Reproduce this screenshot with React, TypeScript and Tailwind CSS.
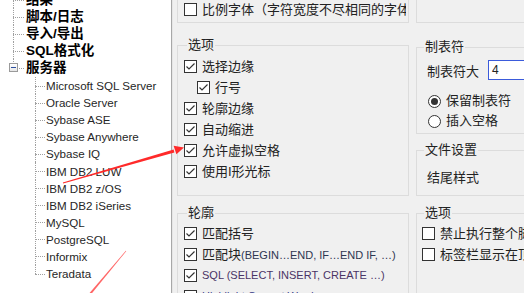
import React from "react";

const parents = ["结果", "脚本/日志", "导入/导出", "SQL格式化", "服务器"];

const servers = [
  "Microsoft SQL Server",
  "Oracle Server",
  "Sybase ASE",
  "Sybase Anywhere",
  "Sybase IQ",
  "IBM DB2 LUW",
  "IBM DB2 z/OS",
  "IBM DB2 iSeries",
  "MySQL",
  "PostgreSQL",
  "Informix",
  "Teradata",
];

const font = "font-['Liberation_Sans','Noto_Sans_CJK_SC',sans-serif]";

function Branch({ last, width }: { last?: boolean; width: string }) {
  return (
    <span className={`relative h-full shrink-0 ${width}`}>
      <span
        className={`absolute left-0 top-0 border-l border-dotted border-[#a0a0a0] ${last ? "h-1/2" : "h-full"}`}
      />
      <span className="absolute left-0 top-1/2 w-full border-t border-dotted border-[#a0a0a0]" />
    </span>
  );
}

function Check({ checked = true }: { checked?: boolean }) {
  return (
    <span className="flex h-[13px] w-[13px] shrink-0 items-center justify-center border border-[#333] bg-white">
      {checked ? (
        <svg width="11" height="11" viewBox="0 0 11 11">
          <polyline points="1.5,5.5 4,8 9.5,2.5" fill="none" stroke="#333" strokeWidth="1.2" />
        </svg>
      ) : null}
    </span>
  );
}

function Radio({ on }: { on?: boolean }) {
  return (
    <span className="flex h-[13px] w-[13px] shrink-0 items-center justify-center rounded-full border border-[#333] bg-white">
      {on ? <span className="h-[7px] w-[7px] rounded-full bg-[#333]" /> : null}
    </span>
  );
}

function Group({ label, className, labelLeft, children }: { label: string; className: string; labelLeft: string; children?: React.ReactNode }) {
  return (
    <div className={`relative shrink-0 border border-[#dcdcdc] ${className}`}>
      <span className={`absolute -top-[9px] bg-[#f0f0f0] px-px text-[13px] leading-[16px] ${labelLeft}`}>{label}</span>
      {children}
    </div>
  );
}

function Row({ children, className = "" }: { children: React.ReactNode; className?: string }) {
  return <div className={`flex h-[21px] items-center gap-[5px] whitespace-nowrap ${className}`}>{children}</div>;
}

export default function App() {
  return (
    <div className={`relative flex h-[293px] w-[524px] overflow-hidden bg-[#f0f0f0] text-[#222] ${font}`}>
      {/* tree */}
      <div className="w-[172px] shrink-0 overflow-hidden border-r border-[#a8a8a8] bg-white">
        <div className="-mt-[9px]">
          {parents.map((p, i) => (
            <div key={p} className="flex h-[17px] items-center pl-[13px]">
              <Branch width="w-[11px]" last={i === parents.length - 1} />
              <span className="relative ml-[2px] whitespace-nowrap text-[13.5px] font-bold leading-[17px] text-black">
                {p}
              </span>
            </div>
          ))}
          <div className="pt-px">
            {servers.map((s, i) => (
              <div key={s} className="flex h-[17.1px] items-center pl-[35px]">
                <Branch width="w-[10px]" last={i === servers.length - 1} />
                <span className="ml-px whitespace-nowrap text-[11.6px] leading-[17px] text-[#262626]">{s}</span>
              </div>
            ))}
          </div>
        </div>
      </div>
      {/* expand box for 服务器 */}
      <span className="absolute left-[9px] top-[63px] flex h-[9px] w-[9px] items-center justify-center border border-[#9a9a9a] bg-gradient-to-b from-white to-[#e6e6e6]">
        <span className="h-px w-[5px] bg-[#2b4f9e]" />
      </span>

      {/* options */}
      <div className="flex flex-1 gap-[7px] border-l border-[#e6e6e6] pl-[4px]">
        <div className="-mt-[10px] flex w-[232px] shrink-0 flex-col">
          <div className="flex h-[33px] shrink-0 items-end border border-[#dcdcdc] pb-[2px] pl-[6px]">
            <Row className="w-[222px] overflow-hidden">
              <Check checked={false} />
              <span className="text-[13px]">比例字体（字符宽度不尽相同的字体）</span>
            </Row>
          </div>
          <Group label="选项" className="mt-[22px] h-[151px] pl-[6px] pt-[10px]" labelLeft="left-[9px]">
            <Row>
              <Check />
              <span className="text-[13px]">选择边缘</span>
            </Row>
            <Row className="pl-[13px]">
              <Check />
              <span className="text-[13px]">行号</span>
            </Row>
            <Row>
              <Check />
              <span className="text-[13px]">轮廓边缘</span>
            </Row>
            <Row>
              <Check />
              <span className="text-[13px]">自动缩进</span>
            </Row>
            <Row>
              <Check />
              <span className="text-[13px]">允许虚拟空格</span>
            </Row>
            <Row>
              <Check />
              <span className="text-[13px]">使用I形光标</span>
            </Row>
          </Group>
          <Group label="轮廓" className="mt-[17px] h-[120px] pl-[6px] pt-[9px]" labelLeft="left-[9px]">
            <Row>
              <Check />
              <span className="text-[13px]">匹配括号</span>
            </Row>
            <Row>
              <Check />
              <span className="text-[13px]">
                匹配块<span className="text-[11px] text-[#2d3550]">(BEGIN…END, IF…END IF, …)</span>
              </span>
            </Row>
            <Row>
              <Check />
              <span className="text-[11px] text-[#4a3466]">SQL (SELECT, INSERT, CREATE …)</span>
            </Row>
            <Row>
              <Check />
              <span className="text-[11px] text-[#3a3f8a]">Highlight Current Word</span>
            </Row>
          </Group>
        </div>

        <div className="-mt-[10px] flex w-[130px] shrink-0 flex-col">
          <div className="h-[33px] shrink-0 border border-[#dcdcdc]" />
          <Group label="制表符" className="mt-[24px] h-[87px] pl-[10px] pt-[12px]" labelLeft="left-[7px]">
            <div className="flex h-[20px] items-center gap-[9px] whitespace-nowrap">
              <span className="pt-[4px] text-[13px]">制表符大</span>
              <span className="flex h-[20px] w-[60px] shrink-0 items-center border border-[#3b5bdb] bg-white pl-[3px] text-[12px]">
                4
              </span>
            </div>
            <div className="mt-[11px] flex h-[20px] items-center gap-[5px] whitespace-nowrap pl-px">
              <Radio on />
              <span className="text-[13px]">保留制表符</span>
            </div>
            <div className="flex h-[20px] items-center gap-[5px] whitespace-nowrap pl-px">
              <Radio />
              <span className="text-[13px]">插入空格</span>
            </div>
          </Group>
          <Group label="文件设置" className="mt-[16px] h-[46px] pl-[10px] pt-[17px]" labelLeft="left-[7px]">
            <div className="flex h-[20px] items-center whitespace-nowrap">
              <span className="text-[13px]">结尾样式</span>
            </div>
          </Group>
          <Group label="选项" className="mt-[17px] h-[120px] pl-[5px] pt-[9px]" labelLeft="left-[7px]">
            <Row>
              <Check checked={false} />
              <span className="text-[13px]">禁止执行整个脚本</span>
            </Row>
            <Row>
              <Check checked={false} />
              <span className="text-[13px]">标签栏显示在顶部</span>
            </Row>
          </Group>
        </div>
      </div>

      {/* red annotation arrows */}
      <svg className="pointer-events-none absolute left-0 top-0" width="524" height="293" viewBox="0 0 524 293">
        <polygon points="62.9,182.5 173.6,149.5 174.4,152.5 63.1,183.5" fill="#ff2a2a" />
        <polygon points="184,147.4 173.6,145.8 176.4,154.2" fill="#ff2a2a" />
        <polygon points="89.2,293.4 125.8,250.8 126.2,251.2 90.8,294.6" fill="#ff4a4a" opacity="0.85" />
      </svg>
    </div>
  );
}
